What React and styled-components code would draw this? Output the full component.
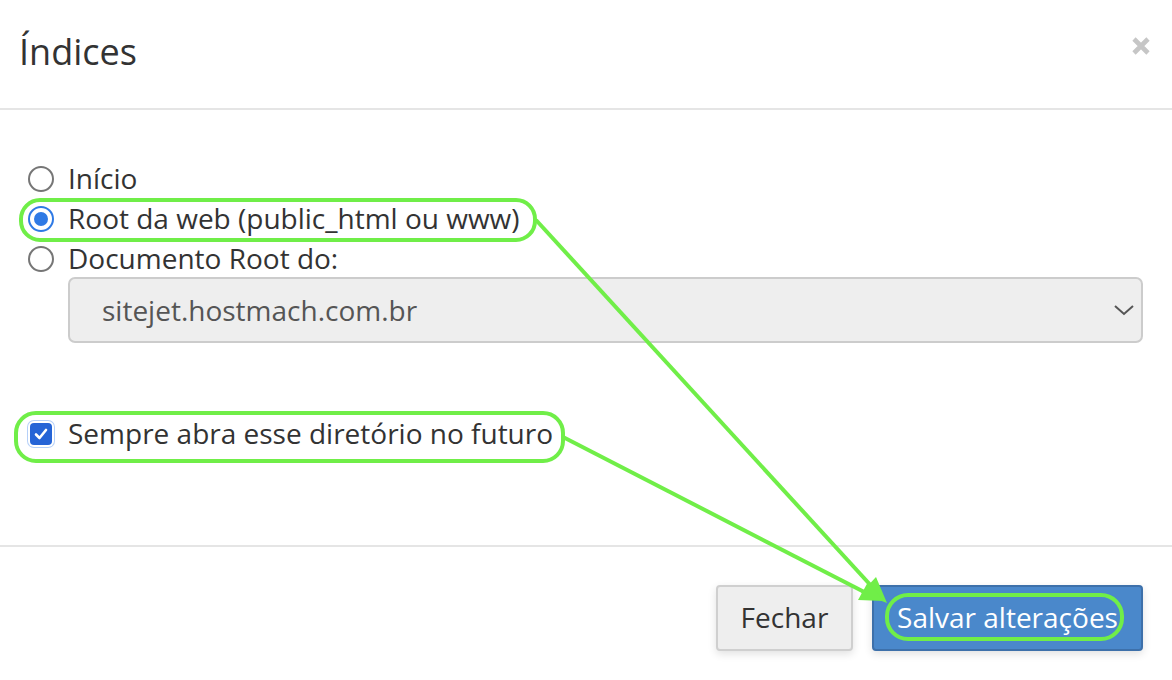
import React from "react";
import styled, { createGlobalStyle } from "styled-components";

const Global = createGlobalStyle`
  html, body { margin: 0; padding: 0; background: #fff; }
  body { font-family: "Open Sans", "Liberation Sans", sans-serif; color: #333; }
`;

const Modal = styled.div`
  position: relative;
  width: 1172px;
  height: 680px;
  background: #fff;
  overflow: hidden;
`;

const Header = styled.div`
  height: 108px;
  border-bottom: 2px solid #e5e5e5;
  display: flex;
  align-items: center;
  justify-content: space-between;
  padding: 0 22px 0 19px;
  box-sizing: content-box;
`;

const Title = styled.h1`
  margin: 0;
  font-size: 36px;
  font-weight: 400;
  color: #333;
  line-height: 1;
  padding-bottom: 4px;
`;

const Close = styled.button`
  border: 0;
  background: none;
  padding: 0;
  width: 18px;
  height: 18px;
  margin-bottom: 17px;
  display: flex;
`;

const Body = styled.div`
  padding: 49px 29px 91px 28px;
  border-bottom: 2px solid #e5e5e5;
`;

const OptionRow = styled.label`
  display: flex;
  align-items: center;
  height: 40px;
  font-size: 28px;
  color: #333;
  gap: 14px;
  & > span:last-child { margin-top: -3px; }
`;

const Text = styled.span``;

const Radio = styled.span`
  width: 26px;
  height: 26px;
  box-sizing: border-box;
  border-radius: 50%;
  border: 2px solid ${(p) => (p.checked ? "#2f7ae5" : "#767676")};
  background: #fff;
  display: flex;
  align-items: center;
  justify-content: center;
  flex: none;
  &::after {
    content: "";
    width: 14px;
    height: 14px;
    border-radius: 50%;
    background: ${(p) => (p.checked ? "#2f7ae5" : "transparent")};
  }
`;

const SelectBox = styled.div`
  margin: -2px 0 0 40px;
  height: 66px;
  box-sizing: border-box;
  border: 2px solid #ccc;
  border-radius: 7px;
  background: #eee;
  display: flex;
  align-items: center;
  justify-content: space-between;
  padding: 0 6px 0 32px;
  font-size: 28px;
  color: #555;
`;

const CheckRow = styled.label`
  display: flex;
  align-items: center;
  height: 40px;
  margin-top: 71px;
  gap: 16px;
  font-size: 28px;
  color: #333;
  padding-left: 2px;
  & > span:last-child { margin-top: -3px; }
`;

const CheckBox = styled.span`
  width: 22px;
  height: 22px;
  border-radius: 4px;
  background: #2564d6;
  display: flex;
  align-items: center;
  justify-content: center;
  box-shadow: 0 0 0 2px #fff, 0 0 0 3px rgba(90, 150, 240, 0.45);
  flex: none;
`;

const Footer = styled.div`
  display: flex;
  justify-content: flex-end;
  gap: 19px;
  padding: 38px 29px 0 0;
`;

const Button = styled.button`
  height: 66px;
  box-sizing: border-box;
  border-radius: 4px;
  font-family: inherit;
  font-size: 28px;
  padding: 0 0 3px;
  background: ${(p) => (p.primary ? "#4a88cb" : "#eee")};
  color: ${(p) => (p.primary ? "#fff" : "#333")};
  border: 2px solid ${(p) => (p.primary ? "#3d70aa" : "#cfcfcf")};
  box-shadow: 0 3px 8px rgba(0, 0, 0, 0.12);
  width: ${(p) => p.w}px;
`;

const Overlay = styled.svg`
  position: absolute;
  left: 0;
  top: 0;
  pointer-events: none;
`;

const G = "#70ee48";

export default function App() {
  return (
    <>
      <Global />
      <Modal>
        <Header>
          <Title>Índices</Title>
          <Close aria-label="close">
            <svg width="18" height="18" viewBox="0 0 18 18">
              <path d="M2 2L16 16M16 2L2 16" stroke="#c6c6c6" strokeWidth="4.6" />
            </svg>
          </Close>
        </Header>
        <Body>
          <OptionRow>
            <Radio />
            <Text>Início</Text>
          </OptionRow>
          <OptionRow>
            <Radio checked />
            <Text>Root da web (public_html ou www)</Text>
          </OptionRow>
          <OptionRow>
            <Radio />
            <Text>Documento Root do:</Text>
          </OptionRow>
          <SelectBox>
            sitejet.hostmach.com.br
            <svg width="22" height="14" viewBox="0 0 22 14">
              <path d="M2 3L11 11L20 3" fill="none" stroke="#555" strokeWidth="2" />
            </svg>
          </SelectBox>
          <CheckRow>
            <CheckBox>
              <svg width="16" height="16" viewBox="0 0 16 16">
                <path d="M3 8.5L6.5 12L13 4" fill="none" stroke="#fff" strokeWidth="2.6" strokeLinecap="round" strokeLinejoin="round" />
              </svg>
            </CheckBox>
            <Text>Sempre abra esse diretório no futuro</Text>
          </CheckRow>
        </Body>
        <Footer>
          <Button w={137}>Fechar</Button>
          <Button primary w={271}>Salvar alterações</Button>
        </Footer>
        <Overlay width="1172" height="680" viewBox="0 0 1172 680">
          <rect x="21" y="200" width="514" height="40" rx="19" fill="none" stroke={G} strokeWidth="4" />
          <rect x="16" y="413" width="547" height="48" rx="20" fill="none" stroke={G} strokeWidth="4" />
          <rect x="887" y="595" width="235" height="44" rx="21" fill="none" stroke={G} strokeWidth="4" />
          <line x1="536" y1="220" x2="875" y2="590" stroke={G} strokeWidth="4" />
          <line x1="563" y1="437" x2="872" y2="596" stroke={G} strokeWidth="4" />
          <polygon points="887,603 861,593 876,577" fill={G} />
          <polygon points="884,601 858,600 868,582" fill={G} />
        </Overlay>
      </Modal>
    </>
  );
}
